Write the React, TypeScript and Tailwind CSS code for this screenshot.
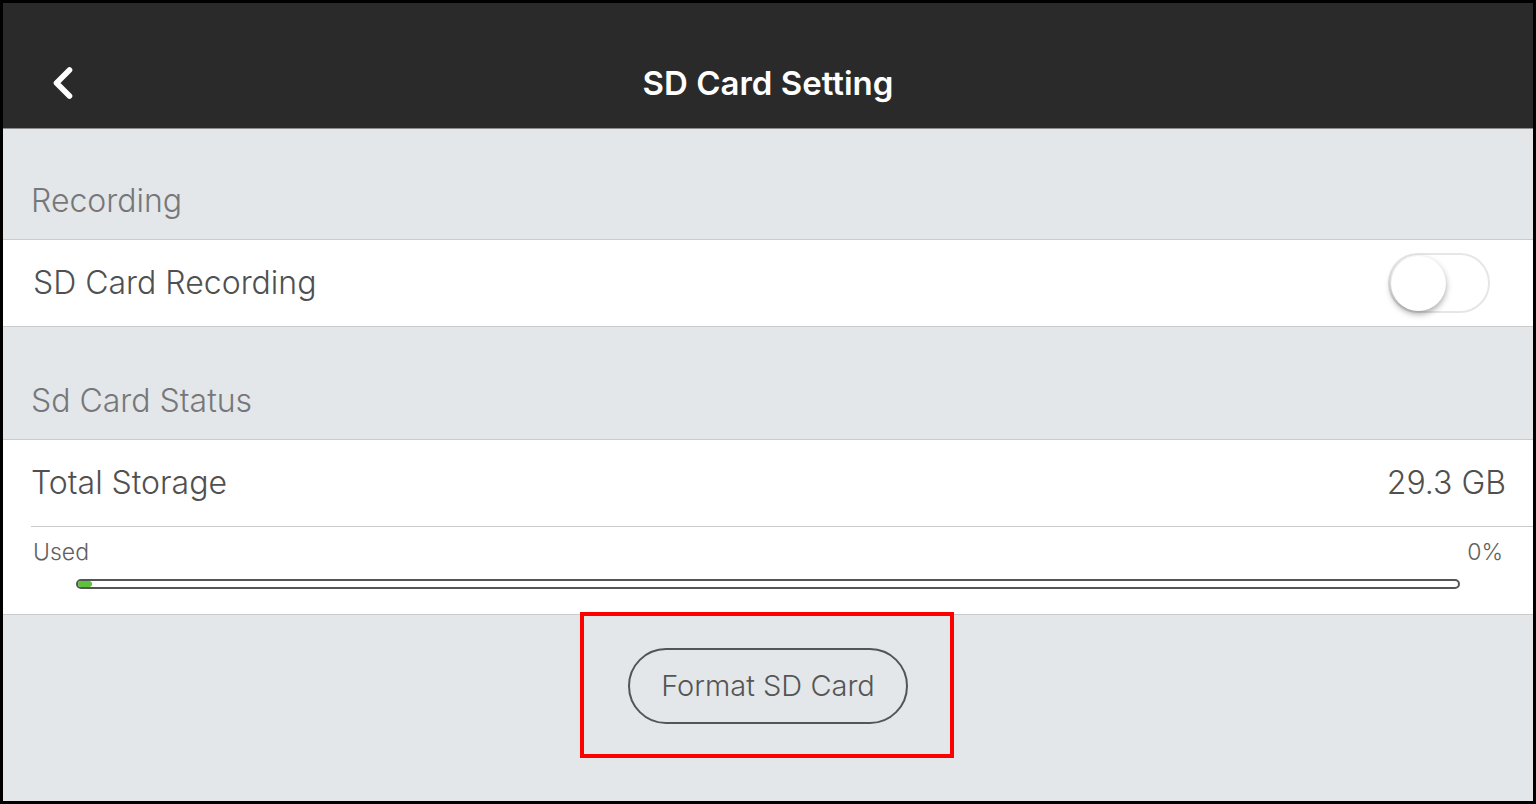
import { ChevronLeft } from "lucide-react";

const font = { fontFamily: "Inter, 'Noto Sans', sans-serif" };

const Toggle = () => (
    <div className="relative h-[60px] w-[102px] rounded-full border-2 border-[#e6e6e6] bg-white">
        <div className="absolute left-[1px] top-[1px] h-[55px] w-[55px] rounded-full bg-white shadow-[0_3px_6px_rgba(0,0,0,0.35)]" />
    </div>
);

export default function App() {
    return (
        <div className="h-[804px] w-[1536px] bg-black p-[3px]" style={font}>
            <div className="flex h-full flex-col bg-[#e3e7ea]">
                <div className="relative flex h-[126px] items-center justify-center border-b border-[#8d8d8d] bg-[#2a2a2a] pt-[36px]">
                    <ChevronLeft
                        className="absolute left-[34px] top-[54px] text-white"
                        size={52}
                        strokeWidth={2.6}
                    />
                    <h1 className="text-[33px] font-semibold text-white">SD Card Setting</h1>
                </div>

                <div className="flex h-[110px] items-end pb-[14px] pl-[28px] text-[32px] font-light text-[#77777a]">
                    Recording
                </div>
                <div className="flex h-[88px] items-center justify-between border-y border-[#cbcbcb] bg-white pl-[30px] pr-[43px]">
                    <span className="text-[32px] font-light text-[#505050]">SD Card Recording</span>
                    <Toggle />
                </div>

                <div className="flex h-[112px] items-end pb-[14px] pl-[28px] text-[32px] font-light text-[#77777a]">
                    Sd Card Status
                </div>
                <div className="border-y border-[#cbcbcb] bg-white">
                    <div className="ml-[28px] flex h-[87px] items-center justify-between border-b border-[#cbcbcb] pr-[27px]">
                        <span className="text-[32px] font-light text-[#505050]">Total Storage</span>
                        <span className="text-[32px] font-light text-[#505050]">29.3 GB</span>
                    </div>
                    <div className="flex h-[87px] flex-col px-[30px] pt-[10px]">
                        <div className="flex justify-between text-[23px] font-light leading-[30px] text-[#606060]">
                            <span>Used</span>
                            <span>0%</span>
                        </div>
                        <div className="mx-[43px] mt-[12px] h-[10px] rounded-full border-2 border-[#555] bg-white">
                            <div className="h-full w-[14px] rounded-full bg-[#5cc23a]" />
                        </div>
                    </div>
                </div>

                <div className="flex justify-center pt-[33px]">
                    <div className="relative">
                        <button className="flex h-[76px] w-[280px] items-center justify-center rounded-full border-2 border-[#555] text-[29px] font-light text-[#555]">
                            Format SD Card
                        </button>
                        <div className="pointer-events-none absolute left-[-48px] top-[-36px] h-[146px] w-[374px] border-4 border-[#ff0000]" />
                    </div>
                </div>
            </div>
        </div>
    );
}
